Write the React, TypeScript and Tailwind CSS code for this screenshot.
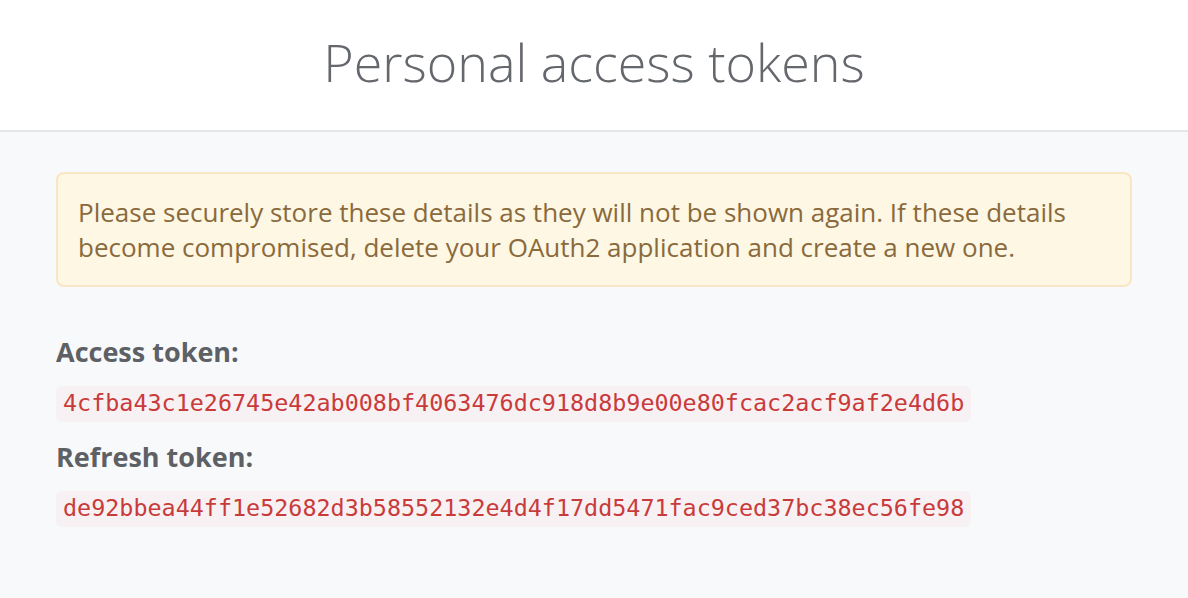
const tokens = [
  { label: "Access token:", value: "4cfba43c1e26745e42ab008bf4063476dc918d8b9e00e80fcac2acf9af2e4d6b" },
  { label: "Refresh token:", value: "de92bbea44ff1e52682d3b58552132e4d4f17dd5471fac9ced37bc38ec56fe98" },
];

const App = () => {
  return (
    <div className="min-h-screen bg-[#f8f9fb] font-['Open_Sans',sans-serif]">
      <header className="h-[132px] bg-white border-b-2 border-[#e4e6ea] flex justify-center">
        <h1 className="pt-[26px] text-[52px] font-light leading-[72px] text-[#64676c]">
          Personal access tokens
        </h1>
      </header>
      <main className="px-[56px] pt-[40px]">
        <div className="rounded-[8px] border-2 border-[#f8e6c4] bg-[#fdf7e4] px-[20px] pt-[21px] pb-[20px] text-[26px] leading-[35px] text-[#8a6a3c]">
          Please securely store these details as they will not be shown again. If these details become
          compromised, delete your OAuth2 application and create a new one.
        </div>
        <div className="mt-[47px] flex flex-col gap-[17px]">
          {tokens.map((t) => (
            <div key={t.label} className="flex flex-col items-start gap-[16px]">
              <h2 className="text-[27px] font-bold leading-[36px] text-[#5d6064]">{t.label}</h2>
              <code className="flex h-[36px] items-center rounded-[6px] bg-[#f8f1f3] px-[7px] font-['DejaVu_Sans_Mono',monospace] text-[23.4px] text-[#c93b3b]">
                {t.value}
              </code>
            </div>
          ))}
        </div>
      </main>
    </div>
  );
};

export default App;
